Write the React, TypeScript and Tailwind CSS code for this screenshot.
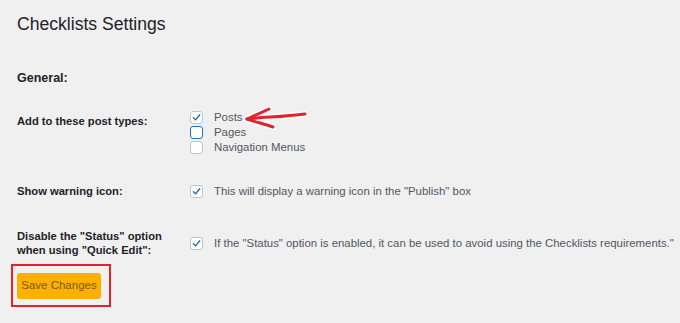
import React from "react";

const font = { fontFamily: "'Liberation Sans', Arial, sans-serif" };

function Box({ checked, focus }: { checked?: boolean; focus?: boolean }) {
  return (
    <span
      className={
        "flex h-[13px] w-[13px] shrink-0 items-center justify-center rounded-[3px] bg-white " +
        (focus ? "border-[1.5px] border-[#2271b1]" : "border border-[#c3c4c7]")
      }
    >
      {checked && (
        <svg width="9" height="9" viewBox="0 0 10 10">
          <path d="M1.5 5.2 L4 7.6 L8.6 2" fill="none" stroke="#2271b1" strokeWidth="1.6" strokeLinecap="round" strokeLinejoin="round" />
        </svg>
      )}
    </span>
  );
}

function Opt({ checked, focus, children }: { checked?: boolean; focus?: boolean; children: React.ReactNode }) {
  return (
    <div className="flex h-[15px] items-center gap-[11px] whitespace-nowrap">
      <Box checked={checked} focus={focus} />
      <span className="text-[11.4px] leading-[15px] text-[#50575e]">{children}</span>
    </div>
  );
}

const label = "w-[173px] shrink-0 whitespace-nowrap text-[11.2px] font-bold text-[#1d2327]";

export default function App() {
  return (
    <div className="relative h-[323px] w-[680px] overflow-hidden bg-[#f0f0f1] pl-[17px] pt-[10px]" style={font}>
      <h1 className="text-[17.6px] leading-[28px] font-normal text-[#1d2327]">Checklists Settings</h1>
      <h2 className="mt-[31px] text-[12.5px] leading-[18px] font-bold text-[#1d2327]">General:</h2>

      <div className="mt-[23px] flex">
        <div className={label + " pt-[3px] leading-[16px]"}>Add to these post types:</div>
        <div className="relative flex flex-col">
          <Opt checked>Posts</Opt>
          <Opt focus>Pages</Opt>
          <Opt>Navigation Menus</Opt>
          <svg className="absolute left-[53px] top-[-8px]" width="70" height="30" viewBox="0 0 70 30">
            <g fill="none" strokeLinecap="round" strokeLinejoin="round">
              <path d="M4 17 C20 15 40 15 62 12" stroke="#ffffff" strokeWidth="6" />
              <path d="M4 17 L26 7 M4 17 C12 20 22 22 30 25" stroke="#ffffff" strokeWidth="6" />
              <path d="M4 17 C20 15 40 15 62 12" stroke="#e3232b" strokeWidth="3" />
              <path d="M4 17 L26 7 M4 17 C12 20 22 22 30 25" stroke="#e3232b" strokeWidth="3" />
            </g>
          </svg>
        </div>
      </div>

      <div className="mt-[28px] flex items-center">
        <div className={label + " leading-[16px]"}>Show warning icon:</div>
        <Opt checked>This will display a warning icon in the "Publish" box</Opt>
      </div>

      <div className="mt-[30px] flex items-center">
        <div className={label + " leading-[14px]"}>
          Disable the "Status" option
          <br />
          when using "Quick Edit":
        </div>
        <Opt checked>If the "Status" option is enabled, it can be used to avoid using the Checklists requirements."</Opt>
      </div>

      <div className="ml-[-6px] mt-[7px] w-[100px] border-2 border-[#e3232b] px-[4px] py-[6px]">
        <button className="h-[26px] w-[84px] rounded-[3px] bg-[#fcb000] text-[11.5px] text-[#7a5a1a]">Save Changes</button>
      </div>
    </div>
  );
}
